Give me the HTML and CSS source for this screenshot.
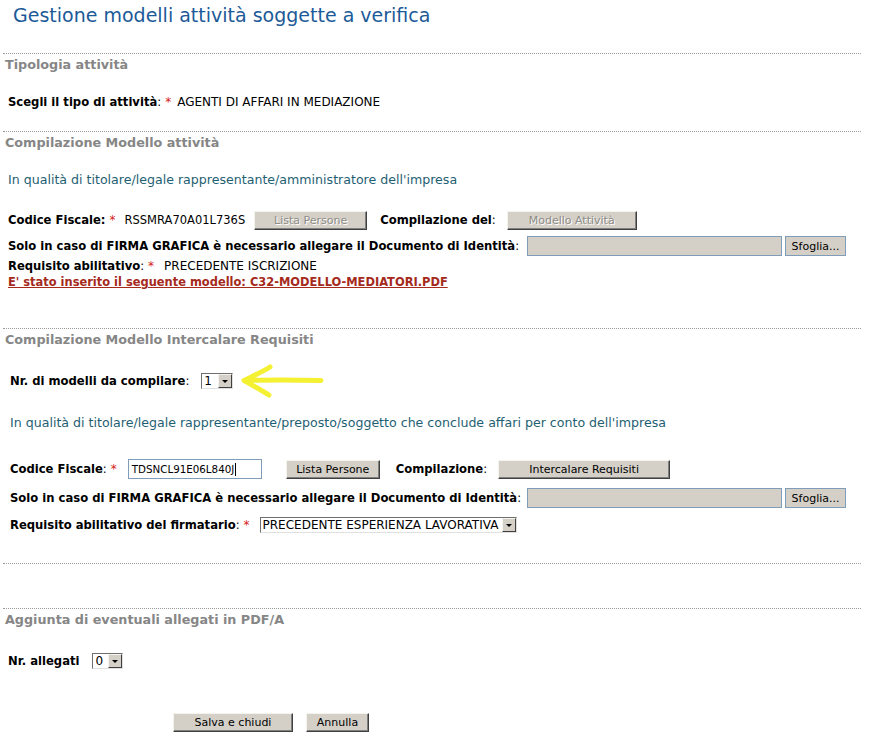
FILE: index.html
```html
<!DOCTYPE html>
<html lang="it">
<head>
<meta charset="utf-8">
<title>Gestione modelli attività soggette a verifica</title>
<link rel="stylesheet" href="styles.css">
</head>
<body>
<div class="page">
  <h1 class="title">Gestione modelli attività soggette a verifica</h1>

  <section class="section s1">
    <h2 class="sec-title">Tipologia attività</h2>
    <div class="row r-tipo">
      <span class="lbl">Scegli il tipo di attività</span><span class="colon">:</span>
      <span class="req">*</span>
      <span class="val">AGENTI DI AFFARI IN MEDIAZIONE</span>
    </div>
  </section>

  <section class="section s2">
    <h2 class="sec-title">Compilazione Modello attività</h2>
    <p class="info i1">In qualità di titolare/legale rappresentante/amministratore dell'impresa</p>
    <div class="row r-cf1">
      <span class="lbl">Codice Fiscale:</span><span class="req">*</span>
      <span class="val cf1">RSSMRA70A01L736S</span>
      <button class="btn disabled b-lista1" type="button">Lista Persone</button>
      <span class="lbl l-comp1">Compilazione del</span><span class="colon">:</span>
      <button class="btn disabled b-modello" type="button">Modello Attività</button>
    </div>
    <div class="row r-file1">
      <span class="lbl">Solo in caso di FIRMA GRAFICA è necessario allegare il Documento di Identità</span><span class="colon">:</span>
      <span class="filebox f1"></span>
      <button class="browse" type="button">Sfoglia...</button>
    </div>
    <div class="row r-req1">
      <span class="lbl">Requisito abilitativo</span><span class="colon">:</span><span class="req">*</span>
      <span class="val req-val">PRECEDENTE ISCRIZIONE</span>
    </div>
    <div class="row r-link">
      <a class="doclink" href="#">E' stato inserito il seguente modello: C32-MODELLO-MEDIATORI.PDF</a>
    </div>
  </section>

  <section class="section s3">
    <h2 class="sec-title">Compilazione Modello Intercalare Requisiti</h2>
    <div class="row r-nr">
      <span class="lbl">Nr. di modelli da compilare</span><span class="colon">:</span>
      <span class="select sel-nr"><span class="sel-text">1</span><span class="sel-arrow"></span></span>
      <svg class="arrow" width="90" height="34" viewBox="0 0 90 34" aria-hidden="true">
        <path d="M84 16.5 C 66 16, 40 15.5, 10 16.5" stroke="#f4f032" stroke-width="5" fill="none" stroke-linecap="round"/>
        <path d="M33 3 C 25 8, 16 12, 7 16.5 C 15 21, 24 26, 32 31" stroke="#f4f032" stroke-width="5" fill="none" stroke-linecap="round" stroke-linejoin="round"/>
      </svg>
    </div>
    <p class="info i2">In qualità di titolare/legale rappresentante/preposto/soggetto che conclude affari per conto dell'impresa</p>
    <div class="row r-cf2">
      <span class="lbl">Codice Fiscale</span><span class="colon">:</span><span class="req">*</span>
      <span class="textbox">TDSNCL91E06L840J<span class="caret"></span></span>
      <button class="btn b-lista2" type="button">Lista Persone</button>
      <span class="lbl l-comp2">Compilazione</span><span class="colon">:</span>
      <button class="btn b-inter" type="button">Intercalare Requisiti</button>
    </div>
    <div class="row r-file2">
      <span class="lbl">Solo in caso di FIRMA GRAFICA è necessario allegare il Documento di Identità</span><span class="colon">:</span>
      <span class="filebox f2"></span>
      <button class="browse" type="button">Sfoglia...</button>
    </div>
    <div class="row r-req2">
      <span class="lbl">Requisito abilitativo del firmatario</span><span class="colon">:</span><span class="req">*</span>
      <span class="select sel-req"><span class="sel-text">PRECEDENTE ESPERIENZA LAVORATIVA</span><span class="sel-arrow"></span></span>
    </div>
  </section>

  <section class="section s4"></section>

  <section class="section s5">
    <h2 class="sec-title">Aggiunta di eventuali allegati in PDF/A</h2>
    <div class="row r-all">
      <span class="lbl">Nr. allegati</span>
      <span class="select sel-all"><span class="sel-text">0</span><span class="sel-arrow"></span></span>
    </div>
    <div class="actions">
      <button class="btn b-salva" type="button">Salva e chiudi</button>
      <button class="btn b-annulla" type="button">Annulla</button>
    </div>
  </section>
</div>
</body>
</html>
```

FILE: styles.css
```css
html, body {
  margin: 0;
  padding: 0;
  background: #ffffff;
}

.page {
  width: 858px;
  margin-left: 3px;
  font-family: "DejaVu Sans", Verdana, sans-serif;
  font-size: 12px;
  color: #000;
}

.title {
  margin: 0;
  padding-left: 10px;
  height: 31px;
  line-height: 31px;
  font-size: 19px;
  font-weight: normal;
  color: #1c5a98;
}

.section {
  border-top: 1px dotted #9a9a9a;
}

.s1 { margin-top: 22px; padding-bottom: 20px; }
.s2 { padding-bottom: 38px; }
.s3 { padding-bottom: 29px; }
.s4 { height: 44px; }

.sec-title {
  margin: 0;
  padding-left: 2px;
  height: 22px;
  line-height: 22px;
  font-size: 12.75px;
  font-weight: bold;
  color: #868686;
}

.row {
  display: flex;
  align-items: center;
  padding-left: 5px;
  white-space: nowrap;
}

.s3 .row { padding-left: 7px; }

.lbl { font-weight: bold; font-size: 11.6px; }
.colon { font-weight: normal; font-size: 11.6px; }

.req {
  color: #d42020;
  margin-left: 4px;
  font-size: 12px;
}

.val { margin-left: 6px; font-size: 12px; }

.info {
  margin: 0;
  padding-left: 5px;
  height: 18px;
  line-height: 18px;
  font-size: 12.6px;
  color: #1f5f73;
}

.s3 .info { padding-left: 7px; }

/* vertical rhythm */
.r-tipo { margin-top: 17px; height: 18px; }
.i1 { margin-top: 17px; }
.r-cf1 { margin-top: 21px; height: 20px; }
.r-file1 { margin-top: 5px; height: 22px; }
.r-req1 { margin-top: 1px; height: 16px; }
.r-link { height: 16px; }
.r-nr { margin-top: 21px; height: 18px; }
.i2 { margin-top: 24px; }
.r-cf2 { margin-top: 26px; height: 22px; }
.r-file2 { margin-top: 7px; height: 22px; }
.r-req2 { margin-top: 7px; height: 18px; }
.r-all { margin-top: 21px; height: 18px; }

/* buttons */
.btn {
  font-family: "DejaVu Sans", Tahoma, sans-serif;
  font-size: 11px;
  height: 19px;
  padding: 0;
  background: #d4d0c8;
  color: #000;
  border: 1px solid;
  border-color: #f4f3ee #404040 #404040 #f4f3ee;
  box-shadow: inset -1px -1px 0 #808080;
}

.btn.disabled {
  color: #8e8c86;
  text-shadow: 1px 1px 0 #ffffff;
}

.cf1 { margin-left: 9px; font-size: 11.5px; }
.b-lista1 { width: 113px; margin-left: 9px; }
.l-comp1 { margin-left: 13px; }
.b-modello { width: 130px; margin-left: 11px; }

.filebox {
  display: inline-block;
  height: 20px;
  background: #d4d0c8;
  border: 1px solid #7f9db9;
  box-sizing: border-box;
}

.browse {
  font-family: "DejaVu Sans", Tahoma, sans-serif;
  font-size: 11px;
  height: 20px;
  width: 61px;
  margin-left: 3px;
  padding: 0;
  background: #d4d0c8;
  border: 1px solid #7f9db9;
  color: #000;
}

.f1 { width: 255px; margin-left: 8px; }
.f2 { width: 255px; margin-left: 6px; }

.req-val { margin-left: 10px; }

.doclink {
  font-weight: bold;
  font-size: 11.45px;
  color: #a52a1c;
  text-decoration: underline;
}

/* selects */
.select {
  display: inline-flex;
  align-items: stretch;
  height: 16px;
  box-sizing: border-box;
  border: 1px solid;
  border-color: #6f6f6f #e0e0e0 #e0e0e0 #6f6f6f;
  background: #fff;
}

.sel-text {
  flex: 1;
  padding-left: 2px;
  line-height: 14px;
  font-size: 12px;
}

.sel-arrow {
  width: 14px;
  background: #d4d0c8;
  border: 1px solid;
  border-color: #f4f3ee #404040 #404040 #f4f3ee;
  box-sizing: border-box;
  position: relative;
}

.sel-arrow::after {
  content: "";
  position: absolute;
  left: 3px;
  top: 5px;
  border-left: 3px solid transparent;
  border-right: 3px solid transparent;
  border-top: 3px solid #000;
}

.sel-nr { width: 32px; margin-left: 12px; }
.sel-req { width: 257px; margin-left: 10px; }
.sel-all { width: 31px; margin-left: 13px; }

.arrow { margin-left: 4px; margin-top: 0; flex: none; }

/* text input */
.textbox {
  display: inline-flex;
  align-items: center;
  width: 134px;
  height: 20px;
  box-sizing: border-box;
  margin-left: 11px;
  padding-left: 3px;
  border: 1px solid #7f9db9;
  background: #fff;
  font-size: 10.3px;
}

.caret {
  display: inline-block;
  width: 1px;
  height: 13px;
  background: #000;
  margin-left: 1px;
}

.b-lista2 { width: 94px; margin-left: 24px; }
.l-comp2 { margin-left: 16px; }
.b-inter { width: 172px; margin-left: 11px; }

.actions {
  display: flex;
  gap: 13px;
  margin-top: 43px;
  padding-left: 170px;
}

.b-salva { width: 120px; }
.b-annulla { width: 63px; }
```
